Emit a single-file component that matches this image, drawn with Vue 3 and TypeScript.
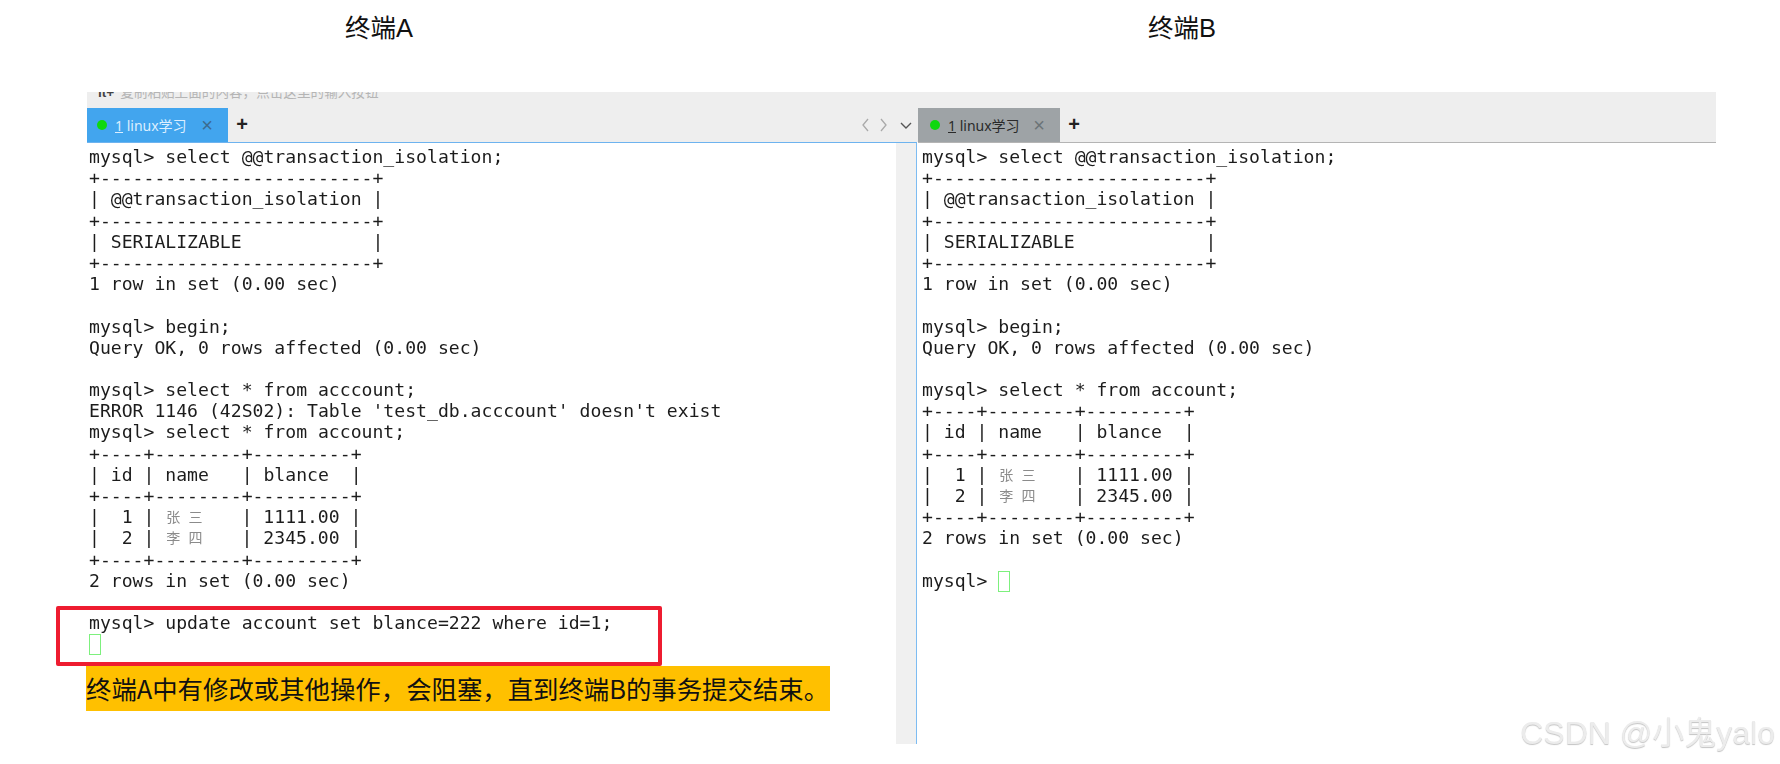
<script setup lang="ts">
interface Row { text?: string; pre?: string; name?: string; post?: string; cursor?: boolean; prompt?: string }
const bar1 = '+-------------------------+'
const bar2 = '+----+--------+---------+'
const head: Row[] = [
  { text: 'mysql> select @@transaction_isolation;' },
  { text: bar1 },
  { text: '| @@transaction_isolation |' },
  { text: bar1 },
  { text: '| SERIALIZABLE            |' },
  { text: bar1 },
  { text: '1 row in set (0.00 sec)' },
  { text: '' },
  { text: 'mysql> begin;' },
  { text: 'Query OK, 0 rows affected (0.00 sec)' },
  { text: '' },
]
const table: Row[] = [
  { text: bar2 },
  { text: '| id | name   | blance  |' },
  { text: bar2 },
  { pre: '|  1 | ', name: '张 三', post: '| 1111.00 |' },
  { pre: '|  2 | ', name: '李 四', post: '| 2345.00 |' },
  { text: bar2 },
  { text: '2 rows in set (0.00 sec)' },
  { text: '' },
]
const comma = '\uFF0C'
const notice = `终端A中有修改或其他操作${comma}会阻塞${comma}直到终端B的事务提交结束。`
const hint = `复制粘贴上面的内容${comma}点击这里的输入按钮`
const panes = [
  {
    id: 'a',
    rows: [
      ...head,
      { text: 'mysql> select * from acccount;' },
      { text: "ERROR 1146 (42S02): Table 'test_db.acccount' doesn't exist" },
      { text: 'mysql> select * from account;' },
      ...table,
      { text: 'mysql> update account set blance=222 where id=1;' },
      { cursor: true, prompt: '' },
    ] as Row[],
  },
  {
    id: 'b',
    rows: [
      ...head,
      { text: 'mysql> select * from account;' },
      ...table,
      { cursor: true, prompt: 'mysql> ' },
    ] as Row[],
  },
]
</script>

<template>
  <div class="page">
    <header class="titles">
      <div class="title">终端A</div>
      <div class="title">终端B</div>
    </header>
    <main class="windows">
      <section class="win win-a">
        <div class="hint"><span class="hint-icon">ıt+</span>{{ hint }}</div>
        <div class="tabbar">
          <div class="tab tab-active">
            <i class="dot"></i><span class="tab-label"><u>1</u> linux学习</span><span class="close">×</span>
          </div>
          <span class="plus">+</span>
          <div class="nav">
            <svg width="60" height="16" viewBox="0 0 60 16" fill="none">
              <path d="M11 2 L6 8 L11 14" stroke="#a9a9a9" stroke-width="1.3" />
              <path d="M24 2 L29 8 L24 14" stroke="#a9a9a9" stroke-width="1.3" />
              <path d="M44 6 L49 11 L54 6" stroke="#555" stroke-width="1.4" />
            </svg>
          </div>
        </div>
        <div class="body body-a">
          <pre class="term"><template v-for="(r, i) in panes[0].rows" :key="i"><div class="line"><template v-if="r.cursor"><span>{{ r.prompt }}</span><i class="cursor"></i></template><template v-else-if="r.name">{{ r.pre }}<span class="cjk">{{ r.name }}</span>{{ r.post }}</template><template v-else>{{ r.text }}</template></div></template></pre>
          <div class="scroll"></div>
          <div class="redbox"></div>
          <div class="banner">{{ notice }}</div>
        </div>
      </section>
      <section class="win win-b">
        <div class="hint"></div>
        <div class="tabbar tabbar-b">
          <div class="tab tab-idle">
            <i class="dot"></i><span class="tab-label"><u>1</u> linux学习</span><span class="close">×</span>
          </div>
          <span class="plus">+</span>
        </div>
        <div class="body">
          <pre class="term term-b"><template v-for="(r, i) in panes[1].rows" :key="i"><div class="line"><template v-if="r.cursor"><span>{{ r.prompt }}</span><i class="cursor"></i></template><template v-else-if="r.name">{{ r.pre }}<span class="cjk">{{ r.name }}</span>{{ r.post }}</template><template v-else>{{ r.text }}</template></div></template></pre>
        </div>
      </section>
    </main>
    <div class="mark">CSDN @小鬼yalo</div>
  </div>
</template>

<style scoped>
.page {
  position: relative;
  width: 1780px;
  height: 764px;
  overflow: hidden;
  background: #fff;
  font-family: "Liberation Sans", "Noto Sans CJK SC", sans-serif;
}
.titles {
  display: grid;
  grid-template-columns: 758px 848px;
  height: 92px;
  padding-top: 11px;
  box-sizing: border-box;
}
.title {
  text-align: center;
  font-size: 25.5px;
  line-height: 34px;
  color: #111;
}
.windows {
  display: grid;
  grid-template-columns: 831px 798px;
  margin-left: 87px;
  height: 652px;
  filter: blur(0.35px);
}
.win {
  display: flex;
  flex-direction: column;
  min-width: 0;
}
.hint {
  height: 16px;
  background: #eeeeee;
  overflow: hidden;
  font-size: 13.6px;
  line-height: 2px;
  color: #b5b5b5;
  padding-left: 11px;
  white-space: nowrap;
}
.hint-icon {
  color: #444;
  margin-right: 6px;
  font-weight: bold;
}
.tabbar {
  display: flex;
  align-items: stretch;
  height: 34px;
  background: #eeeeee;
  position: relative;
  flex: none;
}
.tab {
  width: 141px;
  display: flex;
  align-items: center;
  box-sizing: border-box;
  padding-left: 10px;
  font-family: "Noto Sans", "Noto Sans CJK SC", sans-serif;
  font-size: 14px;
}
.tab-active {
  background: #42a5ee;
  color: #dbeeff;
}
.tab-idle {
  background: #9ea3a6;
  color: #2a2a2a;
  padding-left: 12px;
  width: 142px;
}
.dot {
  width: 10px;
  height: 10px;
  border-radius: 50%;
  background: #0fd80f;
  margin-right: 8px;
  flex: none;
}
.tab-label {
  flex: 1;
  white-space: nowrap;
}
.close {
  width: 26px;
  margin-right: 8px;
  font-size: 20px;
  line-height: 20px;
  text-align: center;
  color: #6b7377;
  font-family: "Liberation Sans", sans-serif;
}
.tab-active .close {
  color: #3c6b8f;
}
.plus {
  width: 28px;
  text-align: center;
  font: bold 20px/32px "Liberation Sans", sans-serif;
  color: #222;
}
.nav {
  position: absolute;
  right: 1px;
  top: 9px;
  line-height: 0;
}
.body {
  position: relative;
  flex: 1;
  display: flex;
  min-height: 0;
  border-top: 1px solid #b4b4b4;
}
.body-a {
  margin-right: 1px;
  border-top: 1px solid #6db3ef;
  border-right: 1px solid #7dbcf2;
}
.term {
  flex: 1;
  margin: 0;
  padding: 3px 0 0 2px;
  font-family: "DejaVu Sans Mono", monospace;
  font-size: 18.13px;
  color: #1c1c1c;
  min-width: 0;
}
.term-b {
  padding-left: 4px;
}
.line {
  height: 21.2px;
  line-height: 21.2px;
  white-space: pre;
}
.cjk {
  display: inline-block;
  width: 76.2px;
  box-sizing: border-box;
  padding-left: 1px;
  font-family: "Noto Sans CJK SC", sans-serif;
  font-size: 14px;
  letter-spacing: 2.5px;
  color: #8b8b8b;
  line-height: 21.2px;
  vertical-align: top;
}
.cursor {
  display: inline-block;
  width: 10px;
  height: 19px;
  border: 1px solid #7df07d;
  vertical-align: top;
  margin-top: 1px;
}
.scroll {
  width: 20px;
  flex: none;
  background: #f0f0f0;
}
.redbox {
  position: absolute;
  left: -31px;
  top: 463px;
  width: 598px;
  height: 52px;
  border: 4px solid #ee1c30;
  border-radius: 2px;
}
.banner {
  position: absolute;
  left: -1px;
  top: 523px;
  width: 744px;
  height: 45px;
  background: #ffc000;
  color: #111;
  font-family: "Noto Sans CJK SC", sans-serif;
  font-size: 25.4px;
  line-height: 45px;
  white-space: nowrap;
}
.mark {
  position: absolute;
  right: 5px;
  top: 713px;
  font-size: 32px;
  line-height: 40px;
  color: #ececec;
  text-shadow: 0 1px 1px #c4c4c4;
  white-space: nowrap;
}
</style>
